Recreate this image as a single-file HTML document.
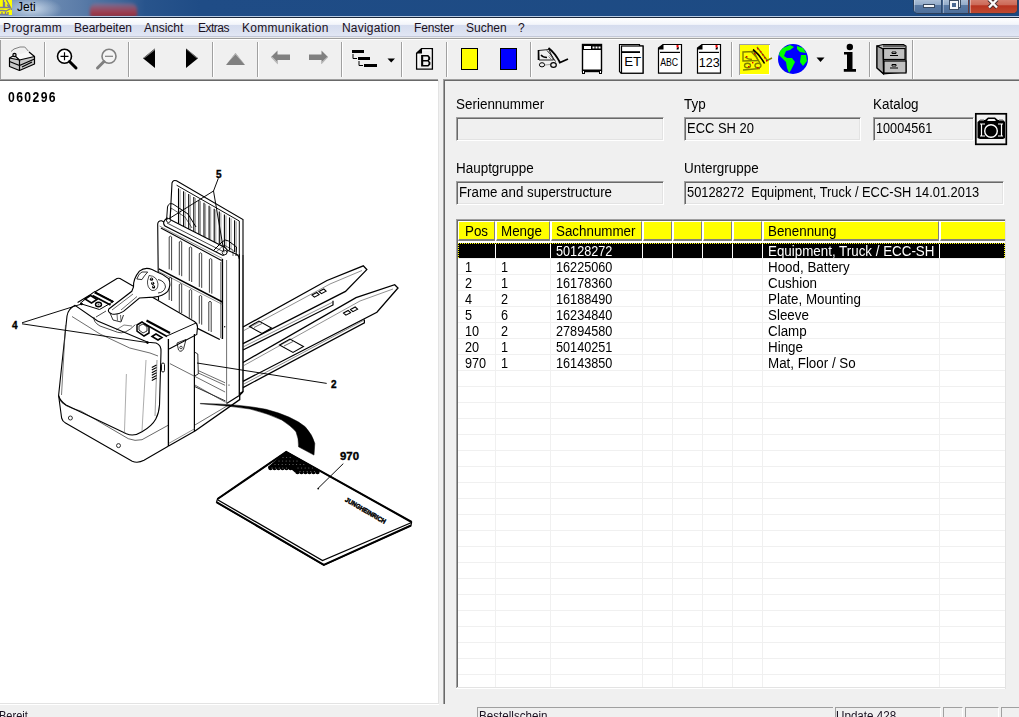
<!DOCTYPE html>
<html><head><meta charset="utf-8">
<style>
*{margin:0;padding:0;box-sizing:border-box}
html,body{width:1019px;height:717px;overflow:hidden;background:#f0f0f0;font-family:"Liberation Sans",sans-serif;position:relative}
.a{position:absolute}
#title{left:0;top:0;width:1019px;height:16px;background:linear-gradient(90deg,#7f9abd 0px,#6a89b1 50px,#5b7ca8 80px,#3f6699 120px,#28548c 145px,#1f4c86 200px,#1c4a82 1019px)}
#glow{left:0;top:0;width:80px;height:16px;background:radial-gradient(ellipse 30px 12px at 32px 9px,rgba(215,228,242,.85),rgba(200,215,235,0) 100%)}
#red{left:90px;top:3px;width:47px;height:14px;background:linear-gradient(rgba(150,125,160,.4),rgba(160,80,100,.8) 35%,rgba(165,55,70,.92) 70%,rgba(145,40,50,.95));border-radius:6px 6px 2px 2px;filter:blur(1.8px)}
#tline1{left:0;top:16px;width:1019px;height:1px;background:#b9cbe3}
#tline2{left:0;top:17px;width:1019px;height:1px;background:#1a2638}
#menu{left:0;top:18px;width:1019px;height:18px;background:linear-gradient(#ffffff 0px,#f4f6fb 6px,#eceff8 7px,#d5dcee 7px,#dbe1f1 13px,#e1e6f4 18px)}
#mline{left:0;top:36px;width:1019px;height:3px;background:linear-gradient(#c3c8d8 0 1px,#ececec 1px 2px,#a0a0a0 2px 3px)}
.mi{position:absolute;top:21px;font-size:12px;color:#1a1020;white-space:nowrap;line-height:15px}
#tb{left:0;top:39px;width:1019px;height:41px;background:#f0f0f0;border-top:1px solid #fff}
#tbb{display:none}
.sep{position:absolute;top:42px;width:2px;height:35px;border-left:1px solid #a0a0a0;border-right:1px solid #fff}

.lbl{position:absolute;font-size:14px;line-height:15px;color:#000;white-space:nowrap;transform:scaleX(0.96);transform-origin:0 0}
.fld{position:absolute;height:24px;border-top:1px solid #a0a0a0;border-left:1px solid #a0a0a0;border-right:1px solid #fff;border-bottom:1px solid #fff;background:#f0f0f0;box-shadow:inset 1px 1px 0 #696969,inset -1px -1px 0 #e3e3e3}
.fld>div{position:absolute;left:0;top:0;right:0;bottom:0;border-top:1px solid #696969;border-left:1px solid #696969;border-right:1px solid #e3e3e3;border-bottom:1px solid #e3e3e3;margin:-1px;margin-right:-1px;margin-bottom:-1px}
.ft{position:absolute;font-size:14px;line-height:15px;color:#000;white-space:nowrap;top:3px;left:2px;transform:scaleX(0.95);transform-origin:0 0}
.gt{position:absolute;font-size:14px;line-height:15px;white-space:nowrap;color:#000;transform:scaleX(0.955);transform-origin:0 0}.gt.num{transform:scaleX(0.905)}
</style></head><body>
<div id="title" class="a"></div>
<div id="glow" class="a"></div>
<div id="red" class="a"></div>
<div id="tline1" class="a"></div>
<div id="tline2" class="a"></div>
<div id="menu" class="a"></div>
<div id="mline" class="a"></div>
<div id="tb" class="a"></div>
<!-- left panel -->
<div class="a" style="left:0;top:79px;width:438px;height:1px;background:#a0a0a0"></div><div class="a" style="left:0;top:80px;width:438px;height:1px;background:#696969"></div>
<div class="a" style="left:0;top:81px;width:438px;height:622px;background:#fff"></div>
<div class="a" style="left:438px;top:80px;width:1px;height:624px;background:#e3e3e3"></div>
<div class="a" style="left:0;top:703px;width:439px;height:1px;background:#e3e3e3"></div>
<div class="a" style="left:8px;top:90px;font-size:14px;font-weight:bold;color:#000;line-height:15px;letter-spacing:1.6px;transform:scaleX(0.87);transform-origin:0 0">060296</div>







<svg class="a" id="drw" style="left:0;top:0" width="440" height="717" viewBox="0 0 440 717"><path d="M170 221 L172 183 Q173 179.5 176.5 180.8 L243 219.6 L243 255" stroke="#000" stroke-width="1.1" fill="none"/><path d="M176.6 185.2 L239.3 221.0 L239.3 254.0" stroke="#000" stroke-width="0.96" fill="none" /><path d="M178.5 188.3 L178.5 228.6" stroke="#000" stroke-width="1.08" fill="none" /><path d="M180.1 189.3 L180.1 228.6" stroke="#555" stroke-width="0.60" fill="none" /><path d="M183.6 191.2 L183.6 230.8" stroke="#000" stroke-width="1.08" fill="none" /><path d="M185.2 192.2 L185.2 230.8" stroke="#555" stroke-width="0.60" fill="none" /><path d="M188.7 194.1 L188.7 233.0" stroke="#000" stroke-width="1.08" fill="none" /><path d="M190.3 195.1 L190.3 233.0" stroke="#555" stroke-width="0.60" fill="none" /><path d="M193.8 197.0 L193.8 235.2" stroke="#000" stroke-width="1.08" fill="none" /><path d="M195.4 198.0 L195.4 235.2" stroke="#555" stroke-width="0.60" fill="none" /><path d="M198.9 199.9 L198.9 237.3" stroke="#000" stroke-width="1.08" fill="none" /><path d="M200.5 200.9 L200.5 237.3" stroke="#555" stroke-width="0.60" fill="none" /><path d="M204.0 202.8 L204.0 239.5" stroke="#000" stroke-width="1.08" fill="none" /><path d="M205.6 203.8 L205.6 239.5" stroke="#555" stroke-width="0.60" fill="none" /><path d="M209.1 205.8 L209.1 241.7" stroke="#000" stroke-width="1.08" fill="none" /><path d="M210.7 206.8 L210.7 241.7" stroke="#555" stroke-width="0.60" fill="none" /><path d="M214.2 208.7 L214.2 243.9" stroke="#000" stroke-width="1.08" fill="none" /><path d="M215.8 209.7 L215.8 243.9" stroke="#555" stroke-width="0.60" fill="none" /><path d="M219.3 211.6 L219.3 246.1" stroke="#000" stroke-width="1.08" fill="none" /><path d="M220.9 212.6 L220.9 246.1" stroke="#555" stroke-width="0.60" fill="none" /><path d="M224.4 214.5 L224.4 248.2" stroke="#000" stroke-width="1.08" fill="none" /><path d="M226.0 215.5 L226.0 248.2" stroke="#555" stroke-width="0.60" fill="none" /><path d="M229.5 217.4 L229.5 250.4" stroke="#000" stroke-width="1.08" fill="none" /><path d="M231.1 218.4 L231.1 250.4" stroke="#555" stroke-width="0.60" fill="none" /><path d="M234.6 220.3 L234.6 252.0" stroke="#000" stroke-width="1.08" fill="none" /><path d="M236.2 221.3 L236.2 252.0" stroke="#555" stroke-width="0.60" fill="none" /><path d="M158.5 300 L157.7 224 Q158 220.5 161.5 220.7 L237 254.5 Q239.3 256 239.3 259" stroke="#000" stroke-width="1.1" fill="none"/><path d="M160.9 228.0 L221.5 260.5" stroke="#000" stroke-width="1.08" fill="none" /><path d="M159.5 226.0 L222.5 258.5" stroke="#444" stroke-width="0.60" fill="none" /><path d="M222.4 259.0 L222.4 339.0" stroke="#000" stroke-width="1.44" fill="none" /><path d="M220.5 262.0 L220.5 338.0" stroke="#444" stroke-width="0.60" fill="none" /><path d="M158.8 268.8 L222.4 302.0" stroke="#000" stroke-width="1.44" fill="none" /><path d="M158.8 271.5 L222.4 304.5" stroke="#444" stroke-width="0.60" fill="none" /><path d="M169.2 269.3 L169.2 236.9 Q170.4 235.4 171.6 236.9 L171.6 270.3" stroke="#000" stroke-width="0.75" fill="none"/><path d="M179.3 275.2 L179.3 241.9 Q180.5 240.4 181.7 241.9 L181.7 276.2" stroke="#000" stroke-width="0.75" fill="none"/><path d="M189.3 281.0 L189.3 247.7 Q190.5 246.2 191.7 247.7 L191.7 282.0" stroke="#000" stroke-width="0.75" fill="none"/><path d="M199.3 286.9 L199.3 253.6 Q200.5 252.1 201.7 253.6 L201.7 287.9" stroke="#000" stroke-width="0.75" fill="none"/><path d="M209.4 292.7 L209.4 259.4 Q210.6 257.9 211.8 259.4 L211.8 293.7" stroke="#000" stroke-width="0.75" fill="none"/><path d="M169.2 300.0 L169.2 278.0 Q170.4 276.5 171.6 278.0 L171.6 301.0" stroke="#000" stroke-width="0.75" fill="none"/><path d="M179.3 312.0 L179.3 284.5 Q180.5 283.0 181.7 284.5 L181.7 313.0" stroke="#000" stroke-width="0.75" fill="none"/><path d="M189.3 317.8 L189.3 290.4 Q190.5 288.9 191.7 290.4 L191.7 318.8" stroke="#000" stroke-width="0.75" fill="none"/><path d="M199.3 323.7 L199.3 296.2 Q200.5 294.7 201.7 296.2 L201.7 324.7" stroke="#000" stroke-width="0.75" fill="none"/><path d="M208.8 331.0 L208.8 302.0 Q210.0 300.5 211.2 302.0 L211.2 332.0" stroke="#000" stroke-width="0.75" fill="none"/><path d="M197.5 328.4 L219.8 339.5" stroke="#000" stroke-width="1.32" fill="none" /><path d="M167 218 L225 247.5 Q228.5 250 226.5 253.5 L223 255.5 L165 226 Q161.5 222.5 167 218 Z" stroke="#000" stroke-width="1.1" fill="#fff"/><path d="M167.0 223.0 L225.0 252.5" stroke="#000" stroke-width="0.72" fill="none" /><path d="M166.5 221 L167.5 207 Q168.5 202.5 173 204 L188 214 L196 227" stroke="#000" stroke-width="1" fill="none"/><path d="M170 219 L171 208 L185 217 L192 228" stroke="#000" stroke-width="0.6" fill="none"/><path d="M213 251 L222 242 Q225 238.5 228.5 241 L236.5 247 L236 256" stroke="#000" stroke-width="1" fill="none"/><path d="M216 252 L224 245 L233 250 L233 256" stroke="#000" stroke-width="0.6" fill="none"/><circle cx="168.5" cy="220.5" r="2" stroke="#000" stroke-width="0.8" fill="#fff"/><circle cx="224.5" cy="252.5" r="2.3" stroke="#000" stroke-width="0.8" fill="#fff"/><path d="M218.3 178.4 L213.5 191.0" stroke="#000" stroke-width="0.96" fill="none" /><path d="M213.5 191.0 L168.8 218.8" stroke="#000" stroke-width="0.96" fill="none" /><path d="M213.5 191.0 L224.0 252.3" stroke="#000" stroke-width="0.96" fill="none" /><path d="M226.6 260.0 L226.6 403.5" stroke="#555" stroke-width="0.84" fill="none" /><path d="M239.3 254.0 L239.3 395.5" stroke="#000" stroke-width="1.32" fill="none" /><path d="M243.0 255.0 L243.0 392.0" stroke="#000" stroke-width="1.44" fill="none" /><path d="M226.6 403.5 L239.3 395.5 L243.0 392.0" stroke="#000" stroke-width="1.20" fill="none" /><circle cx="224.7" cy="326.8" r="0.7" fill="#000"/><circle cx="229" cy="385" r="0.6" fill="#000"/><path d="M243.0 327.0 L327.0 280.5 L363.3 265.9 L366.8 269.6 L345.5 291.4 L243.0 343.7" stroke="#000" stroke-width="1.32" fill="none" /><path d="M243.0 331.0 L330.0 284.0 L362.0 270.5" stroke="#444" stroke-width="0.60" fill="none" /><path d="M243.0 350.0 L333.0 305.0 L333.0 300.8" stroke="#000" stroke-width="1.20" fill="none" /><path d="M243.0 347.0 L333.0 302.0" stroke="#444" stroke-width="0.60" fill="none" /><path d="M243.0 362.5 L356.0 297.7 L394.7 284.7 L398.0 288.0 L376.9 312.3 L243.0 381.3" stroke="#000" stroke-width="1.32" fill="none" /><path d="M243.0 366.0 L360.0 301.0 L393.0 289.0" stroke="#444" stroke-width="0.60" fill="none" /><path d="M243.0 387.6 L364.4 322.8 L364.4 319.6" stroke="#000" stroke-width="1.20" fill="none" /><path d="M243.0 384.5 L364.4 320.0" stroke="#444" stroke-width="0.60" fill="none" /><path d="M312.0 295.0 L316.8 292.5 L319.1 294.7 L314.4 297.2 Z" stroke="#000" stroke-width="1.08" fill="none" /><path d="M319.0 291.5 L323.8 289.0 L326.1 291.2 L321.4 293.7 Z" stroke="#000" stroke-width="1.08" fill="none" /><path d="M343.5 313.0 L348.2 310.5 L350.6 312.7 L345.9 315.2 Z" stroke="#000" stroke-width="1.08" fill="none" /><path d="M350.5 309.5 L355.2 307.0 L357.6 309.2 L352.9 311.7 Z" stroke="#000" stroke-width="1.08" fill="none" /><path d="M249.5 326.5 L259.0 321.0 L271.5 328.0 L262.0 333.5 Z" stroke="#000" stroke-width="1.08" fill="none" /><path d="M254.0 327.5 L262.0 323.5" stroke="#000" stroke-width="0.60" fill="none" /><path d="M279.5 345.0 L290.0 339.0 L303.5 346.5 L293.0 352.5 Z" stroke="#000" stroke-width="1.08" fill="none" /><path d="M284.0 346.0 L293.0 341.5" stroke="#000" stroke-width="0.60" fill="none" /><path d="M77.6 302.5 L117 278.6 Q118.5 277.9 120 278.6 L194.4 321.5 Q197.6 323.5 197.5 327 L196.8 334.5 L169.1 349" stroke="#000" stroke-width="1.1" fill="none"/><path d="M166.8 336.0 L196.0 323.0" stroke="#000" stroke-width="0.96" fill="none" /><path d="M168.4 339.0 L168.4 446.0" stroke="#000" stroke-width="1.32" fill="none" /><path d="M194.4 334.0 L194.4 431.0" stroke="#000" stroke-width="1.20" fill="none" /><path d="M168.6 446.0 L195.0 431.0" stroke="#000" stroke-width="1.20" fill="none" /><path d="M168.6 443.5 L195.0 428.5" stroke="#444" stroke-width="0.60" fill="none" /><path d="M194.5 352 L197.8 354 L198.3 374 L194.5 376" stroke="#000" stroke-width="0.8" fill="none"/><path d="M177 343 L186 339.5 L183.5 349 Q181 353 178.5 350 Z" stroke="#000" stroke-width="0.8" fill="none"/><circle cx="181" cy="347.5" r="1.3" stroke="#000" stroke-width="0.7" fill="none"/><path d="M169.9 363.6 L225.1 392.0" stroke="#333" stroke-width="0.72" fill="none" /><path d="M198.3 370.6 L225.1 382.8" stroke="#333" stroke-width="0.72" fill="none" /><path d="M198.3 373.0 L225.1 385.3" stroke="#333" stroke-width="0.72" fill="none" /><path d="M195.0 386.7 L225.5 401.0" stroke="#000" stroke-width="0.84" fill="none" /><path d="M194.9 425.0 L227.8 405.5" stroke="#333" stroke-width="0.72" fill="none" /><path d="M195.0 431.0 L239.7 399.6 L239.7 393.6 L243.0 391.5" stroke="#000" stroke-width="1.32" fill="none" /><path d="M194.9 385.0 L225.6 402.3" stroke="#333" stroke-width="0.72" fill="none" /><path d="M75 305.3 Q68 309 67 316 L58.6 395.5 Q60 401 66 405 L126.4 433.8 Q134 437 142 431.8 Q152 426 155.8 419 Q159 413 159.5 405 L161 352 Q161.5 345 156 343 L147.8 342.3 L97.6 321 Z" stroke="#000" stroke-width="1.1" fill="none"/><path d="M72.0 316.5 L100.0 334.0 L129.7 348.0 L150.0 353.0 L158.0 356.0" stroke="#333" stroke-width="0.72" fill="none" /><path d="M65.5 325.0 L61.5 395.0" stroke="#444" stroke-width="0.72" fill="none" /><path d="M126.4 374.0 L124.4 433.8" stroke="#666" stroke-width="0.54" fill="none" /><path d="M146.0 360.0 L142.0 431.0" stroke="#666" stroke-width="0.54" fill="none" /><path d="M157.0 360.0 L155.0 416.0" stroke="#555" stroke-width="0.60" fill="none" /><path d="M58.6 395.5 L61.6 418 Q62.5 421.5 65.5 423 L132.2 461.3 Q138 463.5 144 460.3 L168.6 446" stroke="#000" stroke-width="1.1" fill="none"/><path d="M59.6 399.4 Q62 406 81.2 411.2 L128.3 438.7 Q135 441.5 142 439.7 L168.6 425" stroke="#000" stroke-width="0.6" fill="none"/><circle cx="70.4" cy="418" r="2" stroke="#000" stroke-width="0.8" fill="none"/><circle cx="118.5" cy="445.6" r="2" stroke="#000" stroke-width="0.8" fill="none"/><rect x="161.5" y="363" width="3" height="9" rx="1.5" stroke="#000" stroke-width="0.9" fill="none"/><path d="M151.8 367.5 L156.5 365.0" stroke="#000" stroke-width="1.08" fill="none" /><path d="M151.8 370.1 L156.5 367.6" stroke="#000" stroke-width="1.08" fill="none" /><path d="M151.8 372.7 L156.5 370.2" stroke="#000" stroke-width="1.08" fill="none" /><path d="M151.8 375.3 L156.5 372.8" stroke="#000" stroke-width="1.08" fill="none" /><path d="M151.8 377.9 L156.5 375.4" stroke="#000" stroke-width="1.08" fill="none" /><path d="M151.8 380.5 L156.5 378.0" stroke="#000" stroke-width="1.08" fill="none" /><path d="M80 303.5 L94.5 291.5 L113.5 301.5 L99.5 309.5 Z" stroke="#000" stroke-width="1" fill="#fff"/><path d="M94.5 292.3 L113.2 301.8" stroke="#000" stroke-width="1.92" fill="none" /><path d="M92.5 295.5 L110.5 305.0" stroke="#000" stroke-width="1.92" fill="none" /><path d="M85 299 L90.5 295.5 L97 299.5 L91.5 303 Z" stroke="#000" stroke-width="1.5" fill="#fff"/><ellipse cx="98.5" cy="304.5" rx="3" ry="2.2" stroke="#000" stroke-width="1.4" fill="#fff"/><circle cx="98.5" cy="304.5" r="0.9" fill="#555"/><path d="M137 325 L142 322 L149 327 L149 333 L144 336 L137 331 Z" stroke="#000" stroke-width="1.5" fill="#fff"/><path d="M139 326 L143 324 L147 327 L147 331 L143 333 L139 330 Z" stroke="#000" stroke-width="0.8" fill="none"/><path d="M146.5 320.5 L170.0 333.0" stroke="#000" stroke-width="2.04" fill="none" /><path d="M144.0 323.5 L167.0 336.5" stroke="#000" stroke-width="1.68" fill="none" /><path d="M152 336.5 L156 334 L162 337.5 L158 340 Z" stroke="#000" stroke-width="1.5" fill="#fff"/><circle cx="81.6" cy="304" r="1.3" fill="#000"/><circle cx="147.5" cy="342.6" r="1.3" fill="#000"/><path d="M94 317 Q93 322 100 326 L117.7 332.3 Q125 335 135.3 324.7" stroke="#000" stroke-width="0.7" fill="none"/><path d="M96 317 L106 311" stroke="#000" stroke-width="0.7" fill="none"/><path d="M116 330 L124 325 L132 326" stroke="#000" stroke-width="0.5" fill="none"/><path d="M108.8 309 L131.8 291.3 L133.5 287 Q133 279 139.4 271.2 Q145 266.5 152 269.5 L156 271.5 Q163 274 168.6 278.7 Q171.5 284 167.8 291.3 Q163 296 153.6 297.1 Q147 297.5 139.4 298 L123.5 311.4 Q118 315 112 314 Q107 312 108.8 309 Z" stroke="#000" stroke-width="1.1" fill="#fff"/><path d="M112 310 L133 294 M121 310 L137 296.5" stroke="#000" stroke-width="0.6" fill="none"/><path d="M136.8 279 Q139 273 142 272 L147.7 272 Q144 276 141.9 279.6 Z" stroke="#000" stroke-width="0.8" fill="none"/><path d="M158 279.5 Q165 281 165.5 287 Q164 292.5 158 293" stroke="#000" stroke-width="0.8" fill="none"/><path d="M149 275.5 Q157 276 158 284 Q158 291 152 290.5 Q147 288 147.5 281 Z" stroke="#000" stroke-width="0.7" fill="none"/><circle cx="151.5" cy="279.2" r="1.6" fill="#000"/><circle cx="152.7" cy="283.3" r="1.6" fill="#000"/><circle cx="153.6" cy="286.9" r="1.6" fill="#000"/><circle cx="151.3" cy="278.8" r="0.6" fill="#fff"/><circle cx="152.5" cy="282.9" r="0.6" fill="#fff"/><circle cx="153.4" cy="286.5" r="0.6" fill="#fff"/><path d="M110 313 L113 320 L121 322 L123.5 315" stroke="#000" stroke-width="0.8" fill="none"/><path d="M117 314 L117.5 320.5 M120.5 315 L121 321" stroke="#000" stroke-width="0.6" fill="none"/><path d="M22.0 322.8 L81.6 304.0" stroke="#000" stroke-width="0.96" fill="none" /><path d="M22.0 323.8 L147.5 342.6" stroke="#000" stroke-width="0.96" fill="none" /><path d="M197.0 363.0 L326.7 383.4" stroke="#000" stroke-width="0.96" fill="none" /><path d="M200.3 403.4 Q240 404 266 409.3 Q292 416 305.2 426.7 Q312.7 435 314.8 443.4 L314 455.1 L298.5 446.8 Q299 439 296 431.7 Q291 425.9 281.8 420 Q268 413.5 250 409 Q228 405.5 200.3 403.8 Z" fill="#000" stroke="#000" stroke-width="0.5"/><path d="M286.2 451.9 L411.6 522 L411 525.5 L323.8 565 L216.5 502.3 L217.5 499 Z" stroke="#000" stroke-width="1.2" fill="#fff"/><path d="M217.5 499 L286.2 451.9 L411.6 522" stroke="#000" stroke-width="2.1" fill="none"/><path d="M216.8 502.3 L323.8 564.8 L411 525.5" stroke="#000" stroke-width="2" fill="none"/><path d="M218 500 L322.5 560.5 L411.6 522.5" stroke="#000" stroke-width="1.3" fill="none"/><path d="M286.4 451.3 L318.8 469.8 L318.5 472 L295 472.5 L291 469 L268.4 468.5 L268 466.8 Z" fill="#000"/><circle cx="270.5" cy="468" r="2.2" fill="#000"/><circle cx="274.5" cy="468" r="2.2" fill="#000"/><circle cx="278.5" cy="468" r="2.2" fill="#000"/><circle cx="282.5" cy="468" r="2.2" fill="#000"/><circle cx="286.5" cy="468" r="2.2" fill="#000"/><circle cx="290.5" cy="468" r="2.2" fill="#000"/><circle cx="297.5" cy="472" r="2.2" fill="#000"/><circle cx="301.5" cy="472" r="2.2" fill="#000"/><circle cx="305.5" cy="472" r="2.2" fill="#000"/><circle cx="309.5" cy="472" r="2.2" fill="#000"/><circle cx="313.5" cy="472" r="2.2" fill="#000"/><circle cx="317.5" cy="472" r="2.2" fill="#000"/><circle cx="283.0" cy="457.5" r="0.55" fill="#777"/><circle cx="286.6" cy="457.5" r="0.55" fill="#777"/><circle cx="290.2" cy="457.5" r="0.55" fill="#777"/><circle cx="279.0" cy="461.0" r="0.55" fill="#777"/><circle cx="282.6" cy="461.0" r="0.55" fill="#777"/><circle cx="286.2" cy="461.0" r="0.55" fill="#777"/><circle cx="289.8" cy="461.0" r="0.55" fill="#777"/><circle cx="293.4" cy="461.0" r="0.55" fill="#777"/><circle cx="297.0" cy="461.0" r="0.55" fill="#777"/><circle cx="275.0" cy="464.5" r="0.55" fill="#777"/><circle cx="278.6" cy="464.5" r="0.55" fill="#777"/><circle cx="282.2" cy="464.5" r="0.55" fill="#777"/><circle cx="285.8" cy="464.5" r="0.55" fill="#777"/><circle cx="289.4" cy="464.5" r="0.55" fill="#777"/><circle cx="293.0" cy="464.5" r="0.55" fill="#777"/><circle cx="296.6" cy="464.5" r="0.55" fill="#777"/><circle cx="300.2" cy="464.5" r="0.55" fill="#777"/><circle cx="303.8" cy="464.5" r="0.55" fill="#777"/><circle cx="272.0" cy="468.0" r="0.55" fill="#777"/><circle cx="275.6" cy="468.0" r="0.55" fill="#777"/><circle cx="279.2" cy="468.0" r="0.55" fill="#777"/><circle cx="282.8" cy="468.0" r="0.55" fill="#777"/><circle cx="286.4" cy="468.0" r="0.55" fill="#777"/><circle cx="298.0" cy="468.0" r="0.55" fill="#777"/><circle cx="301.6" cy="468.0" r="0.55" fill="#777"/><circle cx="305.2" cy="468.0" r="0.55" fill="#777"/><circle cx="308.8" cy="468.0" r="0.55" fill="#777"/><circle cx="312.4" cy="468.0" r="0.55" fill="#777"/><circle cx="300.0" cy="471.5" r="0.55" fill="#777"/><circle cx="303.6" cy="471.5" r="0.55" fill="#777"/><circle cx="307.2" cy="471.5" r="0.55" fill="#777"/><circle cx="310.8" cy="471.5" r="0.55" fill="#777"/><circle cx="314.4" cy="471.5" r="0.55" fill="#777"/><path d="M343.3 463.6 L318.2 488.2" stroke="#000" stroke-width="0.96" fill="none" /><circle cx="318.2" cy="488.6" r="0.9" fill="#000"/><text x="0" y="0" transform="translate(344.5 501) rotate(30)" font-family="Liberation Sans" font-weight="bold" font-size="6.5" textLength="46" lengthAdjust="spacingAndGlyphs" fill="#000" stroke="#000" stroke-width="0.5">JUNGHEINRICH</text><g font-family="Liberation Sans" font-weight="bold" font-size="10" fill="#000" stroke="#000" stroke-width="0.35"><text x="216" y="178">5</text><text x="12" y="329">4</text><text x="331" y="388">2</text><text x="340" y="460" textLength="19" lengthAdjust="spacingAndGlyphs">970</text></g></svg>
<!-- right panel -->
<div class="a" style="left:443px;top:79px;width:576px;height:625px;border-top:2px solid #696969;border-left:2px solid #696969;background:#f0f0f0"></div>
<div class="a" style="left:443px;top:79px;width:576px;height:1px;background:#a0a0a0"></div>
<div class="a" style="left:443px;top:79px;width:1px;height:625px;background:#a0a0a0"></div>

<div id="tbb" class="a"></div>

<div class="a" style="left:0;top:0;width:12px;height:15px;background:#ffff00"></div>
<svg class="a" style="left:0;top:0" width="12" height="15" viewBox="0 0 12 15"><g stroke="#7a7a98" stroke-width="1.35" fill="none"><path d="M3.5 0 L3.5 7 M4.5 2 L4.5 7 M6.5 0 L11 8.5 L11.5 10 M0 7.5 L10 7.5 M0 10.5 L3 10.5 L6 11 L10 9 M0 14.5 L8 14.5 L8 12 M2 12 L2 14.5 M5.5 12 L5.5 14.5 M7 4.5 L8 6 M8.5 5.5 L8.5 8"/></g></svg>
<div class="mi" style="left:17px;top:0px;color:#000;font-size:12px">Jeti</div>
<div class="mi" style="left:3px;letter-spacing:0.4px">Programm</div>
<div class="mi" style="left:74px">Bearbeiten</div>
<div class="mi" style="left:144px">Ansicht</div>
<div class="mi" style="left:198px;letter-spacing:-0.5px">Extras</div>
<div class="mi" style="left:242px;letter-spacing:0.3px">Kommunikation</div>
<div class="mi" style="left:342px;letter-spacing:0.2px">Navigation</div>
<div class="mi" style="left:414px;letter-spacing:-0.15px">Fenster</div>
<div class="mi" style="left:466px">Suchen</div>
<div class="mi" style="left:518px">?</div>

<div class="a" style="left:913px;top:-3px;width:105px;height:17px;border:1px solid #2a3e5a;border-radius:0 0 5px 5px;background:#3e5f8a;overflow:hidden">
 <div class="a" style="left:0;top:0;width:28px;height:15px;background:linear-gradient(#b4c6dc 0%,#94acc9 45%,#5a7aa3 50%,#4f709b 100%);border-right:1px solid #2e4a6e;box-shadow:inset 1px 0 0 rgba(255,255,255,.35)"></div>
 <div class="a" style="left:29px;top:0;width:26px;height:15px;background:linear-gradient(#b4c6dc 0%,#94acc9 45%,#5a7aa3 50%,#4f709b 100%);border-right:1px solid #6a3a3a;box-shadow:inset 1px 0 0 rgba(255,255,255,.35)"></div>
 <div class="a" style="left:56px;top:0;width:49px;height:15px;background:linear-gradient(#d88878 0%,#cc6a58 45%,#b83420 52%,#c04a30 100%);box-shadow:inset 1px 0 0 rgba(255,255,255,.4)"></div>
</div>
<div class="a" style="left:923px;top:4px;width:12px;height:4px;background:#f4f6f8;border:1px solid #3a4a60"></div>
<div class="a" style="left:952px;top:-2px;width:8px;height:9px;border:2px solid #e8edf3;box-shadow:0 0 0 1px #3a4a60"></div>
<div class="a" style="left:950px;top:1px;width:8px;height:8px;border:2px solid #f4f6f8;background:#4a6890;box-shadow:0 0 0 1px #3a4a60"></div>
<svg class="a" style="left:986px;top:-2px" width="14" height="12" viewBox="0 0 14 12"><path d="M3 1.5 L11 9.5 M11 1.5 L3 9.5" stroke="#4a3030" stroke-width="4.2"/><path d="M3 1.5 L11 9.5 M11 1.5 L3 9.5" stroke="#fbfbfb" stroke-width="2.4"/></svg>

<div class="a" style="left:0;top:40px;width:1px;height:39px;background:#a0a0a0"></div>
<div class="a" style="left:912px;top:40px;width:1px;height:39px;background:#a0a0a0"></div>
<div class="a" style="left:913px;top:40px;width:1px;height:39px;background:#fff"></div>
<div class="sep" style="left:44px"></div><div class="sep" style="left:128px"></div><div class="sep" style="left:212px"></div><div class="sep" style="left:257px"></div><div class="sep" style="left:341px"></div><div class="sep" style="left:401px"></div><div class="sep" style="left:446px"></div><div class="sep" style="left:530px"></div><div class="sep" style="left:731px"></div><div class="sep" style="left:869px"></div>
<svg class="a" style="left:0;top:38px" width="1019" height="42" viewBox="0 38 1019 42">
<g fill="none" stroke="#000" stroke-width="1.2" stroke-linejoin="round">
 <!-- printer -->
 <path d="M11 51.5 L14 49 L20 47 L24.8 47 L28.7 51.5" stroke="#808080" stroke-width="1"/>
 <path d="M14 56 L28.7 51.5 L34.5 56.5 L19.5 60 Z" fill="#f8f8f8" stroke="none"/>
 <path d="M9.5 58 L19.5 60 L34.5 56.5 L34.5 64 L19.5 70.5 L9.5 66.5 Z" fill="#c8c8c8"/>
 <path d="M9.5 58 L13 56 M19.5 60 L19.5 70.5 M9.5 61.5 L19.5 65.5 L34.5 59 M22 67 L32 62 M29 52 L34.5 56.5 M14.5 55.5 L19.5 60"/>
 <circle cx="14.5" cy="55" r="1.6" fill="#c8c8c8"/>
 <!-- zoom in -->
 <circle cx="64.5" cy="56.3" r="7" fill="#fff" stroke-width="1.6"/>
 <path d="M64.5 52.3 V60.3 M60.5 56.3 H68.5" stroke-width="1.2"/>
 <path d="M69.5 61.5 L76 68" stroke-width="3" stroke-linecap="round"/>
 <!-- zoom out -->
 <circle cx="109" cy="56.3" r="7" fill="#f4f4f4" stroke="#808080" stroke-width="1.6"/>
 <path d="M105 56.3 H113" stroke="#808080" stroke-width="1.2"/>
 <path d="M104 61.5 L97.5 68" stroke="#808080" stroke-width="3" stroke-linecap="round"/>
</g>
<g stroke="none">
 <path d="M155 48.5 L155 68 L143 58.2 Z" fill="#000"/>
 <path d="M155 48.5 L143 58.2 L144.5 58.2 L155 50 Z" fill="#808080"/>
 <path d="M186 48.5 L186 68 L198 58.2 Z" fill="#000"/>
 <path d="M186 48.5 L198 58.2 L196.5 58.2 L187 50 Z" fill="#808080"/>
 <path d="M226 65 L235.5 53 L245 65 Z" fill="#808080"/>
 <path d="M226 65 L235.5 53 L245 65 L243.5 63.5 L235.5 54.5 L227 63.5 Z" fill="#c0c0c0"/>
 <!-- gray arrows -->
 <path d="M271 57 L277.5 50.5 L277.5 54.5 L290 54.5 L290 60 L277.5 60 L277.5 64 Z" fill="#808080"/>
 <path d="M272.5 57 L277.5 62 L278 64.5 L271 57.5 Z" fill="#c0c0c0"/>
 <path d="M328 57 L321.5 50.5 L321.5 54.5 L309 54.5 L309 60 L321.5 60 L321.5 64 Z" fill="#808080"/>
 <path d="M328 57.5 L321.5 64 L321 62.5 L327 57 Z" fill="#c0c0c0"/>
 <!-- tree -->
 <rect x="352" y="50" width="12" height="3" fill="#000"/>
 <rect x="358" y="57" width="12" height="3" fill="#000"/>
 <rect x="364" y="64" width="13" height="3" fill="#000"/>
 <path d="M353 54 V58.5 H357 M359 61 V65.5 H363" stroke="#000" stroke-width="1" fill="none"/>
 <path d="M387.5 58.5 L395 58.5 L391.2 62.5 Z" fill="#000"/>
 <!-- B doc -->
 <path d="M416.6 53.3 L421.5 48.6 L432.4 48.6 L432.4 69.2 L416.6 69.2 Z" fill="#f0f0f0" stroke="#000" stroke-width="1.3"/>
 <path d="M418.3 54 V67.8 M422.5 50 H431" stroke="#fff" stroke-width="1"/>
 <path d="M416 53.5 L422 48 L422 53.5 Z" fill="#000"/>
 <path d="M421.1 55 L428.2 55 L430.2 57.3 L430.2 59.4 L428.8 60.8 L430.4 62.2 L430.4 64.6 L428.4 66.6 L421.1 66.6 Z M423.2 56.6 L423.2 59.9 L427.6 59.9 L428.2 59 L428.2 57.5 L427.5 56.6 Z M423.2 61.6 L423.2 65 L427.8 65 L428.5 64 L428.5 62.5 L427.8 61.6 Z" fill="#000" fill-rule="evenodd"/>
 <!-- yellow / blue -->
 <rect x="461.5" y="48.5" width="16" height="21" fill="#ffff00" stroke="#000" stroke-width="1"/>
 <rect x="500.5" y="48.5" width="16" height="21" fill="#0000ff" stroke="#000" stroke-width="1"/>
</g>
</svg>

<svg class="a" style="left:530px;top:38px" width="389" height="42" viewBox="530 38 389 42">
<g fill="none" stroke="#000" stroke-width="1.2">
 <!-- forklift -->
 <path d="M538.5 50.5 L549 49.5 L553.5 60 L539 60 Z" stroke-width="1" stroke="#222"/>
 <path d="M538.5 50 L538.5 60" stroke-width="1.6"/>
 <path d="M541 55 Q543 57.5 547 57.5" stroke-width="1.4"/>
 <path d="M548.5 48 Q555 53 560 62.5" stroke-width="1.8"/>
 <path d="M547 50.5 Q552 55 555.5 61.5" stroke-width="0.9"/>
 <path d="M549.5 55 L553 58.5 M548.5 56.5 L551.5 59.5" stroke-width="0.9" stroke="#777"/>
 <path d="M559 63 L568 59" stroke-width="1.7"/>
 <ellipse cx="542" cy="64.8" rx="2.6" ry="2.1" stroke-width="1"/>
 <ellipse cx="553.5" cy="65" rx="2.8" ry="2.3" stroke-width="1.2"/>
 <path d="M545 65 L550 64.5" stroke-width="0.8" stroke="#888"/>
 <!-- machine -->
 <rect x="582.5" y="44.5" width="19" height="27" fill="#fff" stroke-width="1.4"/>
</g>
<g stroke="none">
 <rect x="582" y="44" width="20" height="6" fill="#000"/>
 <rect x="584" y="46" width="7" height="3" fill="#fff"/>
 <rect x="592.5" y="46.5" width="2" height="2" fill="#fff"/>
 <rect x="595.5" y="46.5" width="2" height="2" fill="#fff"/>
 <rect x="598.5" y="46.5" width="2" height="2" fill="#fff"/>
 <rect x="582" y="69.5" width="20" height="1.6" fill="#000"/>
 <rect x="582" y="71" width="3" height="3" fill="#000"/><rect x="583" y="71" width="1" height="2" fill="#fff"/>
 <rect x="599" y="71" width="3" height="3" fill="#000"/><rect x="600" y="71" width="1" height="2" fill="#fff"/>
</g>
<g fill="#fff" stroke="#000" stroke-width="1.2">
 <!-- ET -->
 <path d="M619.5 44.5 L639.5 44.5 L639.5 46 L643 46 L643 73.2 L621 73.2 L619.5 71.5 Z"/>
 <rect x="621.5" y="46" width="21.5" height="27.2"/>
 <!-- ABC -->
 <path d="M658.5 48 L663 44.5 L681.5 44.5 L681.5 73.2 L658.5 73.2 Z"/>
 <!-- 123 -->
 <path d="M697.5 48 L702 44.5 L720.5 44.5 L720.5 73.2 L697.5 73.2 Z"/>
</g>
<g stroke="none" fill="#000">
 <rect x="622" y="51.2" width="18" height="1.8"/>
 <path d="M658 48.5 L663.5 44 L663.5 49.5 L658 49.5 Z"/>
 <path d="M697 48.5 L702.5 44 L702.5 49.5 L697 49.5 Z"/>
 <rect x="660" y="51.8" width="20" height="1.2"/>
 <rect x="699" y="51.8" width="20" height="1.2"/>
 <path d="M677 47.5 L679 47 L678.5 49.5 L676.5 49.5 Z"/>
 <path d="M716 47.5 L718 47 L717.5 49.5 L715.5 49.5 Z"/>
</g>
<g fill="#ff0000"><rect x="676.5" y="45" width="2" height="2.5"/><rect x="715.5" y="45" width="2" height="2.5"/></g>
<g font-family="Liberation Sans" fill="#000">
 <text x="624.2" y="65.6" font-size="12" textLength="17" lengthAdjust="spacingAndGlyphs">ET</text>
 <text x="660.2" y="65.5" font-size="11" textLength="18" lengthAdjust="spacingAndGlyphs">ABC</text>
 <text x="698.7" y="66.5" font-size="12.5" textLength="21" lengthAdjust="spacingAndGlyphs">123</text>
</g>
<!-- yellow forklift sunken button -->
<rect x="739" y="44" width="31" height="31" fill="#a0a0a0"/>
<rect x="740" y="45" width="30" height="30" fill="#fff"/>
<rect x="740" y="45" width="29" height="29" fill="#909090"/>
<rect x="740" y="45" width="29" height="29" fill="#ffff00"/>
<rect x="739" y="44" width="1" height="31" fill="#a0a0a0"/>
<rect x="739" y="44" width="31" height="1" fill="#a0a0a0"/>
<g fill="none" stroke="#808000" stroke-width="1.4">
 <path d="M743 52 L754 51.5 L758 60.5 L743 61 Z"/>
 <path d="M745 57 Q748 59.5 752 59.5"/>
 <path d="M753 49.5 Q760 55 764.5 63.5" stroke="#000" stroke-width="1.6"/>
 <path d="M751.5 52 Q757 57 760 63"/>
 <path d="M757 47 L767 60 M766 61 L772 58"/>
 <ellipse cx="747.5" cy="65.5" rx="3" ry="2.2"/>
 <ellipse cx="758" cy="65.5" rx="3" ry="2.2"/>
 <path d="M743 70 L760 68.5"/>
</g>
<g fill="#e00000"><rect x="757" y="48" width="1.4" height="1.4"/><rect x="760" y="51" width="1.4" height="1.4"/><rect x="762" y="54" width="1.4" height="1.4"/><rect x="764" y="57" width="1.4" height="1.4"/><rect x="766" y="60" width="1.4" height="1.4"/><rect x="746" y="56" width="1.4" height="1.4"/><rect x="752" y="62" width="1.4" height="1.4"/><rect x="748" y="66" width="1.4" height="1.4"/><rect x="757" y="67" width="1.4" height="1.4"/><rect x="754" y="53" width="1.4" height="1.4"/></g>
<!-- globe -->
<circle cx="793" cy="59" r="15" fill="#0000ff"/>
<path d="M783 48 L790 45 L794 47 L790 50 L786 51 L784 56 L787 58 L792 58 L795 62 L793 66 L791 70 L789 73 L787 68 L786 62 L782 58 L779 55 L780 51 Z" fill="#00ff00"/>
<path d="M797 46 L803 48 L806 53 L800 52 L797 49 Z M801 55 L806 55 L807 61 L803 66 L800 62 Z" fill="#00ff00"/>
<path d="M816.5 57.5 L824.5 57.5 L820.5 62 Z" fill="#000"/>
<!-- i -->
<circle cx="849.8" cy="47" r="3.2" fill="#000"/>
<path d="M844 52 L852.5 52 L852.5 69 L856 69 L856 71.8 L843.8 71.8 L843.8 69 L847 69 L847 54.5 L844 54.5 Z" fill="#000"/>
<!-- cabinet -->
<path d="M877 46 L883 44.5 L903.5 44.5 L906 46 L906 72 L883.5 73.8 L877 68 Z" fill="#c0c0c0" stroke="#000" stroke-width="1.2"/>
<path d="M877 46 L883 49 L883.5 73.8" fill="none" stroke="#000" stroke-width="1.2"/>
<path d="M877 46 L883 49 L883.5 73.8 L877 68 Z" fill="#a8a8a8" stroke="#000" stroke-width="1.2"/>
<rect x="883.5" y="48.5" width="21.5" height="11" fill="#c0c0c0" stroke="#000" stroke-width="1.2"/>
<rect x="884" y="61" width="22" height="12" fill="#c0c0c0" stroke="#000" stroke-width="1.2"/>
<path d="M883 46 L905 46" stroke="#000" stroke-width="1"/>
<path d="M892 52 H896 V53.5 H892 Z M890 55.5 H898 M892 64.5 H896 V66 H892 Z M890 68 H898" stroke="#000" stroke-width="1" fill="#fff"/>
</svg>

<div class="lbl" style="left:456px;top:97px">Seriennummer</div>
<div class="lbl" style="left:684px;top:97px">Typ</div>
<div class="lbl" style="left:873px;top:97px">Katalog</div>
<div class="fld" style="left:456px;top:117px;width:208px"></div>
<div class="fld" style="left:684px;top:117px;width:177px"><span class="ft" style="transform:scaleX(0.925)">ECC SH 20</span></div>
<div class="fld" style="left:873px;top:117px;width:101px"><span class="ft" style="transform:scaleX(0.905)">10004561</span></div>
<div class="lbl" style="left:456px;top:161px">Hauptgruppe</div>
<div class="lbl" style="left:684px;top:161px">Untergruppe</div>
<div class="fld" style="left:456px;top:181px;width:208px"><span class="ft">Frame and superstructure</span></div>
<div class="fld" style="left:684px;top:181px;width:320px"><span class="ft" style="transform:scaleX(0.918)">50128272&nbsp; Equipment, Truck / ECC-SH 14.01.2013</span></div>
<div class="a" style="left:456px;top:219px;width:550px;height:470px;background:#fff"></div>
<div class="a" style="left:458px;top:258px;width:547px;height:1px;background:#f0f0f0"></div>
<div class="a" style="left:458px;top:274px;width:547px;height:1px;background:#f0f0f0"></div>
<div class="a" style="left:458px;top:290px;width:547px;height:1px;background:#f0f0f0"></div>
<div class="a" style="left:458px;top:306px;width:547px;height:1px;background:#f0f0f0"></div>
<div class="a" style="left:458px;top:322px;width:547px;height:1px;background:#f0f0f0"></div>
<div class="a" style="left:458px;top:338px;width:547px;height:1px;background:#f0f0f0"></div>
<div class="a" style="left:458px;top:354px;width:547px;height:1px;background:#f0f0f0"></div>
<div class="a" style="left:458px;top:370px;width:547px;height:1px;background:#f0f0f0"></div>
<div class="a" style="left:458px;top:386px;width:547px;height:1px;background:#f0f0f0"></div>
<div class="a" style="left:458px;top:402px;width:547px;height:1px;background:#f0f0f0"></div>
<div class="a" style="left:458px;top:418px;width:547px;height:1px;background:#f0f0f0"></div>
<div class="a" style="left:458px;top:434px;width:547px;height:1px;background:#f0f0f0"></div>
<div class="a" style="left:458px;top:450px;width:547px;height:1px;background:#f0f0f0"></div>
<div class="a" style="left:458px;top:466px;width:547px;height:1px;background:#f0f0f0"></div>
<div class="a" style="left:458px;top:482px;width:547px;height:1px;background:#f0f0f0"></div>
<div class="a" style="left:458px;top:498px;width:547px;height:1px;background:#f0f0f0"></div>
<div class="a" style="left:458px;top:514px;width:547px;height:1px;background:#f0f0f0"></div>
<div class="a" style="left:458px;top:530px;width:547px;height:1px;background:#f0f0f0"></div>
<div class="a" style="left:458px;top:546px;width:547px;height:1px;background:#f0f0f0"></div>
<div class="a" style="left:458px;top:562px;width:547px;height:1px;background:#f0f0f0"></div>
<div class="a" style="left:458px;top:578px;width:547px;height:1px;background:#f0f0f0"></div>
<div class="a" style="left:458px;top:594px;width:547px;height:1px;background:#f0f0f0"></div>
<div class="a" style="left:458px;top:610px;width:547px;height:1px;background:#f0f0f0"></div>
<div class="a" style="left:458px;top:626px;width:547px;height:1px;background:#f0f0f0"></div>
<div class="a" style="left:458px;top:642px;width:547px;height:1px;background:#f0f0f0"></div>
<div class="a" style="left:458px;top:658px;width:547px;height:1px;background:#f0f0f0"></div>
<div class="a" style="left:458px;top:674px;width:547px;height:1px;background:#f0f0f0"></div>
<div class="a" style="left:495px;top:241px;width:1px;height:446px;background:#f0f0f0"></div>
<div class="a" style="left:550px;top:241px;width:1px;height:446px;background:#f0f0f0"></div>
<div class="a" style="left:642px;top:241px;width:1px;height:446px;background:#f0f0f0"></div>
<div class="a" style="left:672px;top:241px;width:1px;height:446px;background:#f0f0f0"></div>
<div class="a" style="left:702px;top:241px;width:1px;height:446px;background:#f0f0f0"></div>
<div class="a" style="left:732px;top:241px;width:1px;height:446px;background:#f0f0f0"></div>
<div class="a" style="left:762px;top:241px;width:1px;height:446px;background:#f0f0f0"></div>
<div class="a" style="left:939px;top:241px;width:1px;height:446px;background:#f0f0f0"></div>
<div class="a" style="left:458px;top:221px;width:37px;height:20px;background:#ffff00;border-top:1px solid #fff;border-left:1px solid #fff;border-right:1px solid #808080;border-bottom:2px solid #808080"></div>
<div class="a" style="left:496px;top:221px;width:54px;height:20px;background:#ffff00;border-top:1px solid #fff;border-left:1px solid #fff;border-right:1px solid #808080;border-bottom:2px solid #808080"></div>
<div class="a" style="left:551px;top:221px;width:91px;height:20px;background:#ffff00;border-top:1px solid #fff;border-left:1px solid #fff;border-right:1px solid #808080;border-bottom:2px solid #808080"></div>
<div class="a" style="left:643px;top:221px;width:29px;height:20px;background:#ffff00;border-top:1px solid #fff;border-left:1px solid #fff;border-right:1px solid #808080;border-bottom:2px solid #808080"></div>
<div class="a" style="left:673px;top:221px;width:29px;height:20px;background:#ffff00;border-top:1px solid #fff;border-left:1px solid #fff;border-right:1px solid #808080;border-bottom:2px solid #808080"></div>
<div class="a" style="left:703px;top:221px;width:29px;height:20px;background:#ffff00;border-top:1px solid #fff;border-left:1px solid #fff;border-right:1px solid #808080;border-bottom:2px solid #808080"></div>
<div class="a" style="left:733px;top:221px;width:29px;height:20px;background:#ffff00;border-top:1px solid #fff;border-left:1px solid #fff;border-right:1px solid #808080;border-bottom:2px solid #808080"></div>
<div class="a" style="left:763px;top:221px;width:176px;height:20px;background:#ffff00;border-top:1px solid #fff;border-left:1px solid #fff;border-right:1px solid #808080;border-bottom:2px solid #808080"></div>
<div class="a" style="left:940px;top:221px;width:65px;height:20px;background:#ffff00;border-top:1px solid #fff;border-left:1px solid #fff;border-bottom:2px solid #808080"></div>
<div class="a" style="left:458px;top:241px;width:547px;height:2px;background:#fff"></div>
<div class="a" style="left:458px;top:243px;width:547px;height:15px;background:#000"></div>
<div class="a" style="left:495px;top:243px;width:1px;height:15px;background:#fff"></div>
<div class="a" style="left:550px;top:243px;width:1px;height:15px;background:#fff"></div>
<div class="a" style="left:642px;top:243px;width:1px;height:15px;background:#fff"></div>
<div class="a" style="left:672px;top:243px;width:1px;height:15px;background:#fff"></div>
<div class="a" style="left:702px;top:243px;width:1px;height:15px;background:#fff"></div>
<div class="a" style="left:732px;top:243px;width:1px;height:15px;background:#fff"></div>
<div class="a" style="left:762px;top:243px;width:1px;height:15px;background:#fff"></div>
<div class="a" style="left:939px;top:243px;width:1px;height:15px;background:#fff"></div>
<div class="a" style="left:458px;top:243px;width:547px;height:1px;background:repeating-linear-gradient(90deg,#ffff00 0 1px,#000 1px 2px)"></div>
<div class="a" style="left:458px;top:243px;width:1px;height:15px;background:repeating-linear-gradient(#ffff00 0 1px,#000 1px 2px)"></div>
<div class="a" style="left:1004px;top:243px;width:1px;height:15px;background:repeating-linear-gradient(#ffff00 0 1px,#000 1px 2px)"></div>
<div class="a" style="left:456px;top:219px;width:550px;height:1px;background:#a0a0a0"></div>
<div class="a" style="left:456px;top:219px;width:1px;height:470px;background:#a0a0a0"></div>
<div class="a" style="left:457px;top:220px;width:548px;height:1px;background:#696969"></div>
<div class="a" style="left:457px;top:220px;width:1px;height:468px;background:#696969"></div>
<div class="a" style="left:456px;top:688px;width:550px;height:1px;background:#fff"></div>
<div class="a" style="left:457px;top:687px;width:548px;height:1px;background:#e3e3e3"></div>
<div class="a" style="left:1005px;top:219px;width:1px;height:470px;background:#e3e3e3"></div>
<div class="gt" style="left:465px;top:224px">Pos</div>
<div class="gt" style="left:501px;top:224px">Menge</div>
<div class="gt" style="left:556px;top:224px">Sachnummer</div>
<div class="gt" style="left:768px;top:224px">Benennung</div>
<div class="gt num" style="left:556px;top:244px;color:#fff">50128272</div>
<div class="gt" style="left:768px;top:244px;color:#fff">Equipment, Truck / ECC-SH</div>
<div class="gt num" style="left:465px;top:260px;color:#000">1</div>
<div class="gt num" style="left:501px;top:260px;color:#000">1</div>
<div class="gt num" style="left:556px;top:260px;color:#000">16225060</div>
<div class="gt" style="left:768px;top:260px;color:#000">Hood, Battery</div>
<div class="gt num" style="left:465px;top:276px;color:#000">2</div>
<div class="gt num" style="left:501px;top:276px;color:#000">1</div>
<div class="gt num" style="left:556px;top:276px;color:#000">16178360</div>
<div class="gt" style="left:768px;top:276px;color:#000">Cushion</div>
<div class="gt num" style="left:465px;top:292px;color:#000">4</div>
<div class="gt num" style="left:501px;top:292px;color:#000">2</div>
<div class="gt num" style="left:556px;top:292px;color:#000">16188490</div>
<div class="gt" style="left:768px;top:292px;color:#000">Plate, Mounting</div>
<div class="gt num" style="left:465px;top:308px;color:#000">5</div>
<div class="gt num" style="left:501px;top:308px;color:#000">6</div>
<div class="gt num" style="left:556px;top:308px;color:#000">16234840</div>
<div class="gt" style="left:768px;top:308px;color:#000">Sleeve</div>
<div class="gt num" style="left:465px;top:324px;color:#000">10</div>
<div class="gt num" style="left:501px;top:324px;color:#000">2</div>
<div class="gt num" style="left:556px;top:324px;color:#000">27894580</div>
<div class="gt" style="left:768px;top:324px;color:#000">Clamp</div>
<div class="gt num" style="left:465px;top:340px;color:#000">20</div>
<div class="gt num" style="left:501px;top:340px;color:#000">1</div>
<div class="gt num" style="left:556px;top:340px;color:#000">50140251</div>
<div class="gt" style="left:768px;top:340px;color:#000">Hinge</div>
<div class="gt num" style="left:465px;top:356px;color:#000">970</div>
<div class="gt num" style="left:501px;top:356px;color:#000">1</div>
<div class="gt num" style="left:556px;top:356px;color:#000">16143850</div>
<div class="gt" style="left:768px;top:356px;color:#000">Mat, Floor / So</div>
<div class="a" style="left:0;top:704px;width:439px;height:1px;background:#fff"></div><div class="a" style="left:-1px;top:709px;font-size:12px;line-height:15px;color:#1a1020;transform:scaleX(0.92);transform-origin:0 0">Bereit</div>
<div class="a" style="left:477px;top:707px;width:356px;height:12px;border-top:1px solid #a0a0a0;border-left:1px solid #a0a0a0"></div>
<div class="a" style="left:479px;top:709px;font-size:12px;line-height:15px;color:#1a1020;transform:scaleX(0.97);transform-origin:0 0">Bestellschein</div>
<div class="a" style="left:835px;top:707px;width:106px;height:12px;border-top:1px solid #a0a0a0;border-left:1px solid #a0a0a0;border-right:1px solid #fff"></div>
<div class="a" style="left:836px;top:709px;font-size:12px;line-height:15px;color:#1a1020;transform:scaleX(0.97);transform-origin:0 0">Update 428</div>
<div class="a" style="left:943px;top:707px;width:20px;height:12px;border-top:1px solid #a0a0a0;border-left:1px solid #a0a0a0;border-right:1px solid #fff"></div>
<div class="a" style="left:965px;top:707px;width:34px;height:12px;border-top:1px solid #a0a0a0;border-left:1px solid #a0a0a0;border-right:1px solid #fff"></div>
<div class="a" style="left:1001px;top:707px;width:20px;height:12px;border-top:1px solid #a0a0a0;border-left:1px solid #a0a0a0"></div>

<svg class="a" style="left:974px;top:112px" width="36" height="36" viewBox="974 112 36 36">
<rect x="975.8" y="113.8" width="30.5" height="30.5" fill="#f2f2f2" stroke="#000" stroke-width="1.7"/>
<path d="M977.5 122 L980 120 L985 120 L988 117.5 L995 117.5 L998 120 L1003 120 L1005 122 L1005 138 L1003 139 L980 139 L977.5 138 Z" fill="#000"/>
<rect x="980" y="119" width="4" height="1.6" fill="#aaa"/><rect x="999" y="119" width="4" height="1.6" fill="#aaa"/>
<path d="M988.5 119 L994.5 119 L996 121 L987 121 Z" fill="#f2f2f2"/>
<path d="M980 124 H985 M980 136 H985 M998 124 H1003 M998 136 H1003 M981.5 124 V136 M1001.5 124 V136" stroke="#fff" stroke-width="1.2"/>
<circle cx="991" cy="131" r="6.3" fill="#000" stroke="#fff" stroke-width="1.4"/>
</svg>
</body></html>
